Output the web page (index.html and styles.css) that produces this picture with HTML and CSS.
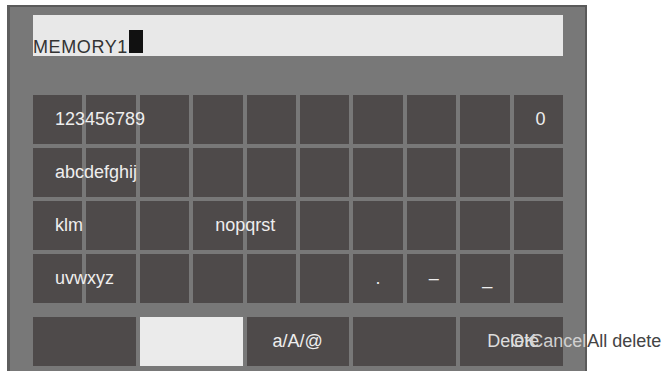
FILE: index.html
```html
<!DOCTYPE html>
<html lang="en">
<head>
    <meta charset="UTF-8">
    <meta name="viewport" content="width=device-width, initial-scale=1.0">
    <title>Name Input</title>
    <link rel="stylesheet" href="styles.css">
</head>
<body>
    <div class="panel">
        <div class="entry">MEMORY1<span class="cursor"></span></div>
        <div class="keys">
            <div class="key"><span class="label">123456789</span></div>
            <div class="key"></div>
            <div class="key"></div>
            <div class="key"></div>
            <div class="key"></div>
            <div class="key"></div>
            <div class="key"></div>
            <div class="key"></div>
            <div class="key"></div>
            <div class="key"><span class="label">0</span></div>

            <div class="key"><span class="label">abcdefghij</span></div>
            <div class="key"></div>
            <div class="key"></div>
            <div class="key"></div>
            <div class="key"></div>
            <div class="key"></div>
            <div class="key"></div>
            <div class="key"></div>
            <div class="key"></div>
            <div class="key"></div>

            <div class="key"><span class="label">klm</span></div>
            <div class="key"></div>
            <div class="key"></div>
            <div class="key"><span class="label">nopqrst</span></div>
            <div class="key"></div>
            <div class="key"></div>
            <div class="key"></div>
            <div class="key"></div>
            <div class="key"></div>
            <div class="key"></div>

            <div class="key"><span class="label">uvwxyz</span></div>
            <div class="key"></div>
            <div class="key"></div>
            <div class="key"></div>
            <div class="key"></div>
            <div class="key"></div>
            <div class="key"><span class="label">.</span></div>
            <div class="key"><span class="label">–</span></div>
            <div class="key"><span class="label">_</span></div>
            <div class="key"></div>
        </div>
        <div class="actions">
            <div class="key"></div>
            <div class="key selected"></div>
            <div class="key"><span class="label wide">a/A/@</span></div>
            <div class="key"></div>
            <div class="key">
                <span class="label wide stack">
                    <span>Delete</span>
                    <span class="ok">OK</span>
                    <span class="cancel">Cancel</span>
                    <span class="outside">All delete</span>
                </span>
            </div>
        </div>
    </div>
</body>
</html>
```

FILE: styles.css
```css
body {
    margin: 0;
    background: #fff;
    font-family: "Liberation Sans", Arial, sans-serif;
    overflow: hidden;
}
.panel {
    width: 580px;
    height: 380px;
    margin: 5px 0 0 7px;
    box-sizing: border-box;
    background: #787878;
    border: 2px solid #5a5a5a;
    border-left: 3px solid #5e5e5e;
    border-bottom: none;
    padding: 8px 22px 0 23px;
}
.entry {
    height: 41px;
    box-sizing: border-box;
    background: #e8e8e8;
    color: #333;
    font-size: 18px;
    line-height: 20px;
    padding-top: 15px;
    letter-spacing: 0.6px;
    white-space: nowrap;
}
.cursor {
    display: inline-block;
    width: 14px;
    height: 23px;
    background: #111;
    vertical-align: baseline;
    margin-left: 1px;
}
.keys {
    display: grid;
    grid-template-columns: repeat(10, 1fr);
    grid-auto-rows: 49px;
    gap: 4px;
    margin-top: 39px;
}
.actions {
    display: grid;
    grid-template-columns: repeat(5, 1fr);
    grid-auto-rows: 49px;
    gap: 4px;
    margin-top: 14px;
}
.key {
    background: #4e4a4a;
    display: flex;
    align-items: center;
    padding-left: 22px;
    min-width: 0;
    overflow: visible;
}
.key.selected {
    background: #ebebeb;
}
.label {
    position: relative;
    z-index: 1;
    color: #eee;
    font-size: 18px;
    white-space: nowrap;
}
.wide {
    margin-left: 4px;
}
.stack {
    display: flex;
    margin-left: 5px;
    color: #ddd;
}
.ok {
    margin-left: -29px;
}
.cancel {
    margin-left: -6px;
    color: #d0d0d0;
}
.outside {
    margin-left: 1px;
    color: #444;
}
```
